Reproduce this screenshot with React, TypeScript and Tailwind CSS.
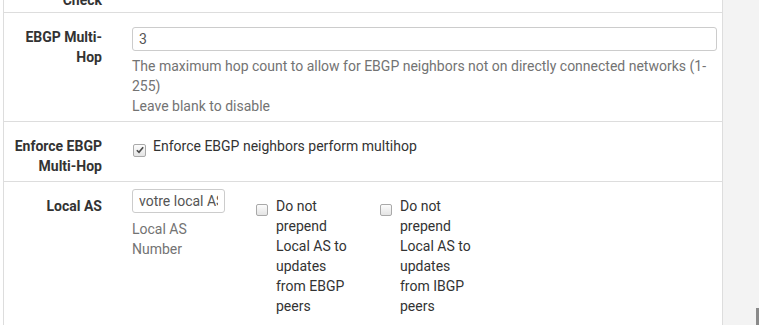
const font = { fontFamily: "Roboto, 'Liberation Sans', sans-serif" };

function Box({ checked = false, small = false }: { checked?: boolean; small?: boolean }) {
  return (
    <span
      className={`inline-flex shrink-0 items-center justify-center rounded-[2px] border border-[#a9a9a9] bg-gradient-to-b from-[#fcfcfc] to-[#e4e4e4] ${
        small ? "h-[12px] w-[12px]" : "h-[13px] w-[13px]"
      }`}
    >
      {checked && (
        <svg viewBox="0 0 12 12" className="h-[10px] w-[10px]">
          <path d="M2.2 6.3 L4.8 8.8 L9.8 2.8" fill="none" stroke="#4a4a4a" strokeWidth="2" />
        </svg>
      )}
    </span>
  );
}

function Label({ children }: { children: React.ReactNode }) {
  return (
    <div className="w-[113px] shrink-0 pr-[15px] pt-[14px] text-right text-[14px] font-bold leading-[20px] text-[#333]">
      {children}
    </div>
  );
}

export default function App() {
  return (
    <div className="flex h-[325px] w-[759px] overflow-hidden bg-white" style={font}>
      <div className="ml-[3px] w-[720px] border-x border-[#ddd] bg-white">
        <div className="h-[13px] overflow-hidden border-b border-[#ddd]">
          <div className="-mt-[10px] w-[113px] pr-[15px] text-right text-[14px] font-bold leading-[20px] text-[#333]">
            Check
          </div>
        </div>

        <div className="flex h-[109px] border-b border-[#ddd]">
          <Label>
            EBGP Multi-
            <br />
            Hop
          </Label>
          <div className="flex-1 pl-[15px] pr-[5px] pt-[14px]">
            <input
              defaultValue="3"
              className="block h-[24px] w-full rounded-[3px] border border-[#ccc] px-[6px] text-[14px] text-[#555] outline-none"
            />
            <div className="mt-[5px] text-[14px] leading-[20px] text-[#737373]">
              The maximum hop count to allow for EBGP neighbors not on directly connected networks (1-255)
              <br />
              Leave blank to disable
            </div>
          </div>
        </div>

        <div className="flex h-[60px] border-b border-[#ddd]">
          <Label>
            Enforce EBGP
            <br />
            Multi-Hop
          </Label>
          <div className="flex flex-1 items-start gap-[7px] pl-[16px] pt-[14px] text-[14px] leading-[20px] text-[#333]">
            <span className="mt-[4px]">
              <Box checked />
            </span>
            Enforce EBGP neighbors perform multihop
          </div>
        </div>

        <div className="flex">
          <Label>Local AS</Label>
          <div className="w-[124px] shrink-0 pl-[15px] pr-[16px] pt-[7px]">
            <input
              defaultValue="votre local AS"
              className="block h-[24px] w-[93px] rounded-[3px] border border-[#ccc] px-[6px] text-[14px] text-[#555] outline-none"
            />
            <div className="mt-[6px] text-[14px] leading-[20px] text-[#737373]">
              Local AS
              <br />
              Number
            </div>
          </div>
          {["EBGP", "IBGP"].map((k) => (
            <div key={k} className="flex w-[124px] shrink-0 items-start gap-[8px] pl-[15px] pt-[14px] text-[14px] leading-[20px] text-[#333]">
              <span className="mt-[5px]">
                <Box small />
              </span>
              <span className="w-[74px]">
                Do not prepend Local AS to updates from {k} peers
              </span>
            </div>
          ))}
        </div>
      </div>
      <div className="relative flex-1 bg-[#f3f3f3]">
        <div className="absolute bottom-0 right-0 h-[17px] w-[3px] bg-[#8a8a8a]" />
      </div>
    </div>
  );
}
